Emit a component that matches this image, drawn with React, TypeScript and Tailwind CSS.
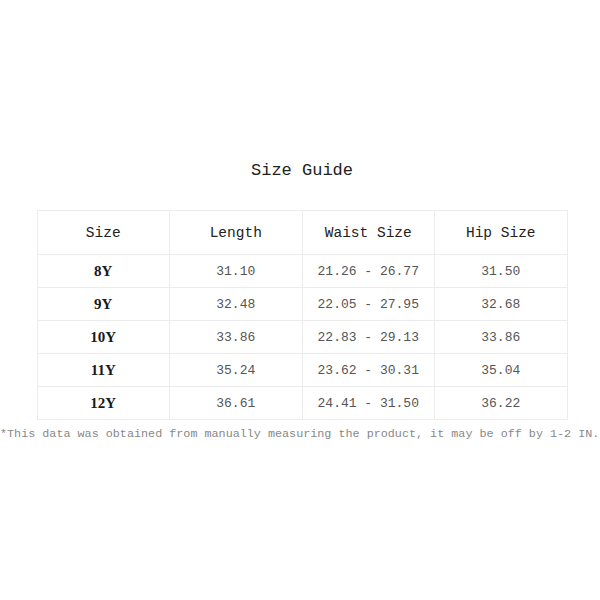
export default function App() {
  const rows = [
    ["8Y", "31.10", "21.26 - 26.77", "31.50"],
    ["9Y", "32.48", "22.05 - 27.95", "32.68"],
    ["10Y", "33.86", "22.83 - 29.13", "33.86"],
    ["11Y", "35.24", "23.62 - 30.31", "35.04"],
    ["12Y", "36.61", "24.41 - 31.50", "36.22"],
  ];

  return (
    <div className="flex h-[600px] w-[600px] flex-col items-center bg-white pt-[159px] font-['Liberation_Mono',monospace]">
      <h1 className="ml-[4px] text-[17px] leading-[24px] text-[#222]">Size Guide</h1>

      <table className="ml-[4px] mt-[27px] w-[531px] table-fixed border-collapse text-center">
        <thead>
          <tr className="h-[44px] text-[14.5px] text-[#222]">
            {["Size", "Length", "Waist Size", "Hip Size"].map((h) => (
              <th key={h} className="border border-[#ececec] pt-[3px] font-normal">{h}</th>
            ))}
          </tr>
        </thead>
        <tbody>
          {rows.map(([size, length, waist, hip]) => (
            <tr key={size} className="h-[33px] text-[13px]">
              <td className="border border-[#ececec] pt-[1px] font-['Liberation_Serif',serif] text-[15px] font-bold text-[#1a1a1a]">{size}</td>
              <td className="border border-[#ececec] pt-[1px] text-[#555]">{length}</td>
              <td className="border border-[#ececec] pt-[1px] text-[#555]">{waist}</td>
              <td className="border border-[#ececec] pt-[1px] text-[#555]">{hip}</td>
            </tr>
          ))}
        </tbody>
      </table>

      <p className="mt-[5px] w-[600px] whitespace-nowrap text-[11.75px] leading-[18px] text-[#888]">
        *This data was obtained from manually measuring the product, it may be off by 1-2 IN.
      </p>
    </div>
  );
}
